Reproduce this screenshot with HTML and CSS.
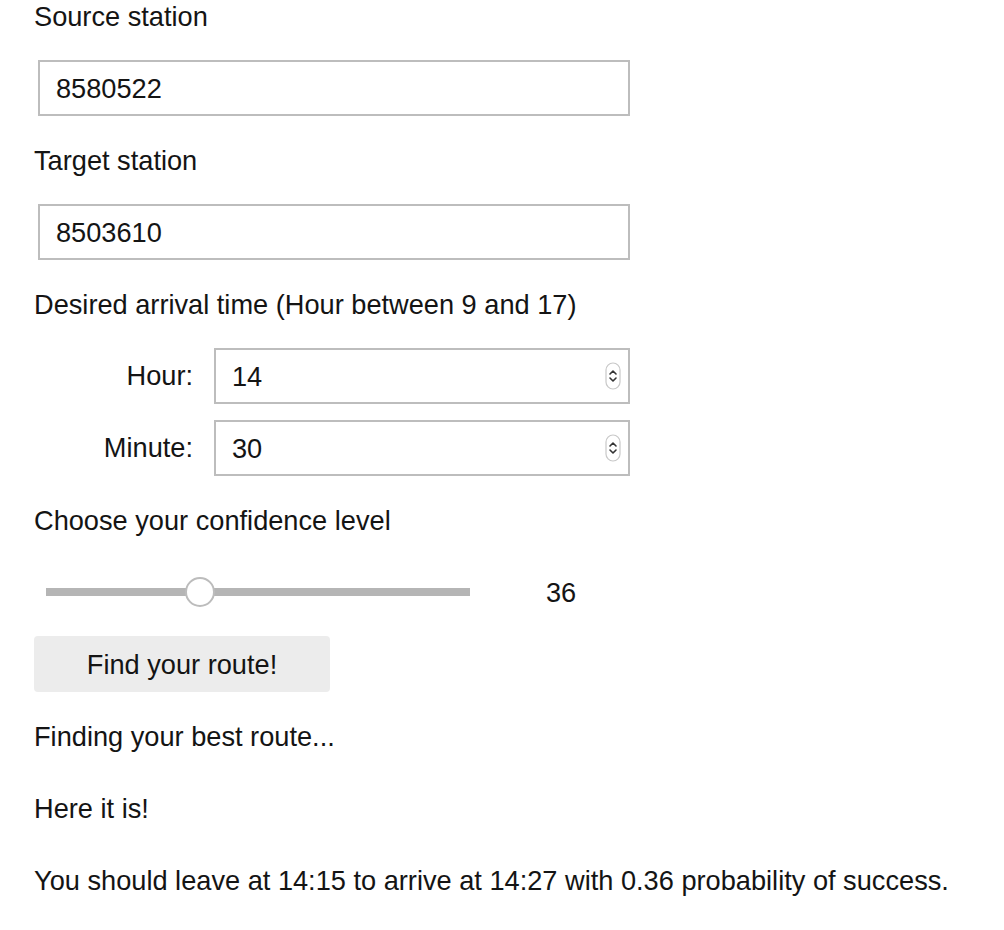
FILE: index.html
```html
<!DOCTYPE html>
<html>
<head>
<meta charset="utf-8">
<link rel="stylesheet" href="styles.css">
</head>
<body>
<div class="app">
  <div class="row label">Source station</div>
  <div class="row field">
    <div class="box wide"><input class="txt" type="text" value="8580522"></div>
  </div>
  <div class="row label">Target station</div>
  <div class="row field">
    <div class="box wide"><input class="txt" type="text" value="8503610"></div>
  </div>
  <div class="row label">Desired arrival time (Hour between 9 and 17)</div>
  <div class="row field">
    <div class="desc">Hour:</div>
    <div class="box num">
      <input class="txt" type="text" value="14">
      <svg class="spin" width="18" height="30" viewBox="0 0 18 30"><rect x="2" y="2" width="14" height="26" rx="7" fill="#fff" stroke="#c8c8c8" stroke-width="1.2"/><path d="M6 13 L9 10 L12 13" fill="none" stroke="#333" stroke-width="1.6" stroke-linecap="round" stroke-linejoin="round"/><path d="M6 17 L9 20 L12 17" fill="none" stroke="#333" stroke-width="1.6" stroke-linecap="round" stroke-linejoin="round"/></svg>
    </div>
  </div>
  <div class="row field">
    <div class="desc">Minute:</div>
    <div class="box num">
      <input class="txt" type="text" value="30">
      <svg class="spin" width="18" height="30" viewBox="0 0 18 30"><rect x="2" y="2" width="14" height="26" rx="7" fill="#fff" stroke="#c8c8c8" stroke-width="1.2"/><path d="M6 13 L9 10 L12 13" fill="none" stroke="#333" stroke-width="1.6" stroke-linecap="round" stroke-linejoin="round"/><path d="M6 17 L9 20 L12 17" fill="none" stroke="#333" stroke-width="1.6" stroke-linecap="round" stroke-linejoin="round"/></svg>
    </div>
  </div>
  <div class="row label">Choose your confidence level</div>
  <div class="row slider-row">
    <div class="track">
      <div class="thumb" style="left: 36.3%"></div>
    </div>
    <div class="readout">36</div>
  </div>
  <div class="row btn-row">
    <button class="btn">Find your route!</button>
  </div>
  <div class="row label">Finding your best route...</div>
  <div class="row label">Here it is!</div>
  <div class="row label">You should leave at 14:15 to arrive at 14:27 with 0.36 probability of success.</div>
</div>
</body>
</html>
```

FILE: styles.css
```css
html, body {
  margin: 0;
  padding: 0;
  background: #ffffff;
}

body {
  font-family: "Liberation Sans", Arial, sans-serif;
  font-size: 27.2px;
  color: #141414;
}

.app {
  display: flex;
  flex-direction: column;
  gap: 16px;
  margin-top: -12px;
  padding-left: 34px;
}

.row {
  height: 56px;
  display: flex;
  align-items: center;
  padding-top: 2px;
  box-sizing: border-box;
}

.field {
  padding-left: 4px;
  padding-top: 0;
}

.box {
  box-sizing: border-box;
  height: 56px;
  border: 2px solid #bdbdbd;
  display: flex;
  align-items: center;
  background: #fff;
}

.wide {
  width: 592px;
}

.num {
  width: 416px;
  padding-right: 6px;
}

.txt {
  flex: 1;
  min-width: 0;
  border: none;
  outline: none;
  background: transparent;
  font-family: inherit;
  font-size: 27.2px;
  color: #141414;
  padding: 2px 0 0 16px;
  margin: 0;
  height: 100%;
  box-sizing: border-box;
}

.spin {
  flex: none;
}

.desc {
  width: 155px;
  text-align: right;
  padding-right: 21px;
  white-space: nowrap;
}

.slider-row {
  padding-left: 12px;
  padding-top: 0;
}

.track {
  position: relative;
  width: 424px;
  height: 8px;
  background: #b5b5b5;
}

.thumb {
  position: absolute;
  top: 50%;
  width: 30px;
  height: 30px;
  box-sizing: border-box;
  margin-left: -15px;
  margin-top: -15px;
  border-radius: 50%;
  background: #fff;
  border: 2px solid #bcbcbc;
}

.readout {
  margin-left: 76px;
  padding-top: 2px;
}

.btn-row {
  padding-top: 0;
}

.btn {
  width: 296px;
  height: 56px;
  border: none;
  border-radius: 4px;
  background: #ececec;
  font-family: inherit;
  font-size: 27.2px;
  color: #141414;
  padding: 2px 0 0 0;
}
```
